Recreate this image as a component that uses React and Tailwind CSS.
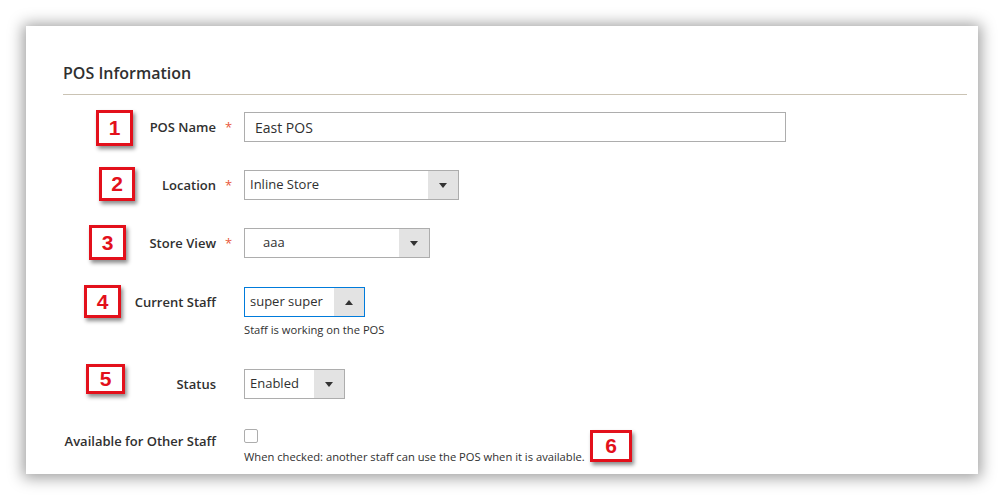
import React from 'react';

const font = { fontFamily: '"Open Sans", "Liberation Sans", Arial, sans-serif' };

function Badge({ n, className }) {
  return (
    <div
      className={
        'absolute flex items-center justify-center bg-white border-[3px] border-[#e3101b] shadow-[2px_3px_4px_rgba(0,0,0,0.45)] font-["Liberation_Sans",Arial,sans-serif] font-bold text-[21px] text-[#e3101b] ' +
        className
      }
    >
      {n}
    </div>
  );
}

function Label({ text, required }) {
  return (
    <>
      <div className="w-[153px] shrink-0 text-right text-[13px] font-semibold text-[#303030] leading-[18px]">
        {text}
      </div>
      <div className="w-[28px] shrink-0 pl-[9px] text-[#e8583a] text-[13px] leading-[18px]">
        {required ? '*' : ''}
      </div>
    </>
  );
}

function Select({ value, width, up, focused, textPad = 'pl-[5px]' }) {
  return (
    <div
      className={
        'flex h-[30px] border ' +
        (focused ? 'border-[#007bdb]' : 'border-[#adadad]') +
        ' ' +
        width
      }
    >
      <div className={'flex-1 flex items-center text-[13px] text-[#303030] ' + textPad}>{value}</div>
      <div className="w-[30px] bg-[#e3e3e3] flex items-center justify-center">
        {up ? (
          <div className="w-0 h-0 border-l-[4px] border-r-[4px] border-b-[5px] border-l-transparent border-r-transparent border-b-[#333]" />
        ) : (
          <div className="w-0 h-0 border-l-[4px] border-r-[4px] border-t-[5px] border-l-transparent border-r-transparent border-t-[#333]" />
        )}
      </div>
    </div>
  );
}

export default function App() {
  return (
    <div className="relative w-[1004px] h-[500px] bg-white overflow-hidden" style={font}>
      <div className="ml-[26px] mt-[26px] w-[952px] h-[448px] bg-white shadow-[0_1px_14px_3px_rgba(0,0,0,0.38)] pl-[37px] pr-[11px] pt-[36px]">
        <h2 className="text-[16px] leading-[22px] font-semibold text-[#303030]">POS Information</h2>
        <div className="mt-[10px] h-px bg-[#cac3b4]" />

        <div className="mt-[17px] flex items-center">
          <Label text="POS Name" required />
          <div className="w-[542px] h-[30px] border border-[#adadad] flex items-center pl-[10px] text-[14px] text-[#303030]">
            East POS
          </div>
        </div>

        <div className="mt-[28px] flex items-center">
          <Label text="Location" required />
          <Select value="Inline Store" width="w-[215px]" />
        </div>

        <div className="mt-[28px] flex items-center">
          <Label text="Store View" required />
          <Select value="aaa" width="w-[186px]" textPad="pl-[18px]" />
        </div>

        <div className="mt-[29px] flex items-center">
          <Label text="Current Staff" />
          <Select value="super super" width="w-[121px]" up focused />
        </div>
        <div className="ml-[181px] mt-[5px] text-[11.2px] leading-[16px] text-[#303030]">
          Staff is working on the POS
        </div>

        <div className="mt-[31px] flex items-center">
          <Label text="Status" />
          <Select value="Enabled" width="w-[101px]" />
        </div>

        <div className="mt-[30px] flex items-start">
          <div className="pt-[3px] flex">
            <Label text="Available for Other Staff" />
          </div>
          <div>
            <div className="w-[14px] h-[14px] border border-[#adadad] rounded-[2px] bg-white" />
            <div className="mt-[6px] text-[11.2px] leading-[16px] text-[#303030]">
              When checked: another staff can use the POS when it is available.
            </div>
          </div>
        </div>
      </div>

      <Badge n="1" className="left-[96px] top-[110px] w-[37px] h-[36px]" />
      <Badge n="2" className="left-[99px] top-[167px] w-[36px] h-[34px]" />
      <Badge n="3" className="left-[89px] top-[225px] w-[37px] h-[35px]" />
      <Badge n="4" className="left-[84px] top-[285px] w-[37px] h-[33px]" />
      <Badge n="5" className="left-[86px] top-[364px] w-[39px] h-[30px]" />
      <Badge n="6" className="left-[590px] top-[430px] w-[42px] h-[32px]" />
    </div>
  );
}
